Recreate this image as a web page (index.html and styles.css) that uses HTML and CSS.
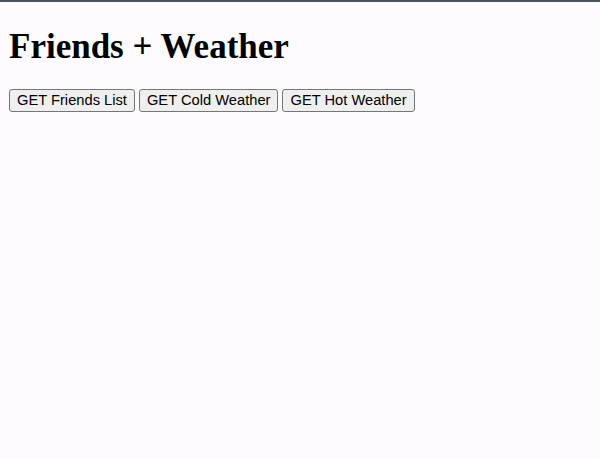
FILE: index.html
```html
<!DOCTYPE html>
<html>
<head>
<meta charset="utf-8">
<link rel="stylesheet" href="styles.css">
</head>
<body>
<div class="topbar"></div>
<main class="page">
  <h1 class="title">Friends + Weather</h1>
  <div class="actions">
    <button class="btn">GET Friends List</button>
    <button class="btn">GET Cold Weather</button>
    <button class="btn">GET Hot Weather</button>
  </div>
</main>
</body>
</html>
```
FILE: styles.css
```css
html, body {
  margin: 0;
  padding: 0;
  background: #fdfbfe;
}
.topbar {
  height: 2px;
  background: #4b5661;
}
.page {
  padding: 0 9px;
}
.title {
  font-family: "Liberation Serif", "Times New Roman", serif;
  font-weight: bold;
  font-size: 35px;
  line-height: 44px;
  margin: 23px 0 0 0;
  color: #000;
}
.actions {
  display: flex;
  gap: 4px;
  margin-top: 20px;
}
.btn {
  font-family: "Liberation Sans", Arial, sans-serif;
  font-size: 14.7px;
  height: 23px;
  padding: 0 7px;
  background: #efefef;
  border: 1px solid #767676;
  border-radius: 3px;
  color: #000;
  line-height: 21px;
}
```
